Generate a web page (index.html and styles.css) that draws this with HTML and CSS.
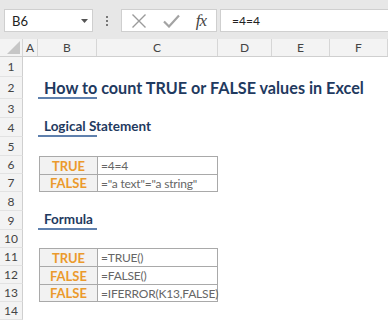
FILE: index.html
```html
<!DOCTYPE html>
<html lang="en">
<head>
    <meta charset="UTF-8">
    <title>How to count TRUE or FALSE values in Excel</title>
    <link rel="stylesheet" href="styles.css">
</head>
<body>
    <div class="toolbar">
        <div class="name-box">
            <span>B6</span>
            <svg class="caret" width="7" height="4" viewBox="0 0 7 4"><path d="M0 0h7L3.5 4z" fill="#555"/></svg>
        </div>
        <div class="grip"><i></i><i></i><i></i></div>
        <div class="fx-box">
            <svg width="16" height="16" viewBox="0 0 16 16"><path d="M1.5 1.5l13 13M14.5 1.5l-13 13" stroke="#9b9b9b" stroke-width="1.4" fill="none"/></svg>
            <svg width="17" height="14" viewBox="0 0 17 14"><path d="M1 7.5l5 5L16 1.5" stroke="#a3a3a3" stroke-width="2.2" fill="none"/></svg>
            <span class="fx">fx</span>
        </div>
        <div class="formula">=4=4</div>
    </div>

    <div class="sheet">
        <div class="row head">
            <div class="corner"><svg width="13" height="13" viewBox="0 0 13 13"><path d="M13 0v13H0z" fill="#c6c6c6"/></svg></div>
            <div>A</div><div>B</div><div>C</div><div>D</div><div>E</div><div>F</div>
        </div>
        <div class="row r20"><div class="num">1</div></div>
        <div class="row r22"><div class="num">2</div><div></div><div class="h1 line">How to count TRUE or FALSE values in Excel</div></div>
        <div class="row r19"><div class="num">3</div></div>
        <div class="row r19"><div class="num">4</div><div></div><div class="h2 line">Logical Statement</div></div>
        <div class="row r19"><div class="num">5</div></div>
        <div class="row r18"><div class="num">6</div><div></div><div class="key t">TRUE</div><div class="val t end">=4=4</div></div>
        <div class="row r18"><div class="num">7</div><div></div><div class="key t bot">FALSE</div><div class="val t end bot">="a text"="a string"</div></div>
        <div class="row r19"><div class="num">8</div></div>
        <div class="row r19"><div class="num">9</div><div></div><div class="h2 line">Formula</div></div>
        <div class="row r18"><div class="num">10</div></div>
        <div class="row r18"><div class="num">11</div><div></div><div class="key t">TRUE</div><div class="val t end">=TRUE()</div></div>
        <div class="row r18"><div class="num">12</div><div></div><div class="key t">FALSE</div><div class="val t end">=FALSE()</div></div>
        <div class="row r18"><div class="num">13</div><div></div><div class="key t bot">FALSE</div><div class="val t end bot">=IFERROR(K13,FALSE)</div></div>
        <div class="row r18"><div class="num">14</div></div>
    </div>
</body>
</html>
```

FILE: styles.css
```css
body {
    margin: 0;
    width: 388px;
    height: 320px;
    overflow: hidden;
    font-family: 'Lato', 'Liberation Sans', sans-serif;
    background: #ffffff;
    color: #333;
}
.toolbar {
    display: flex;
    align-items: stretch;
    height: 39px;
    padding-top: 9px;
    box-sizing: border-box;
    background: #e7e7e7;
}
.name-box {
    display: flex;
    align-items: center;
    justify-content: space-between;
    width: 89px;
    height: 23px;
    margin-left: 4px;
    padding: 0 4px 0 7px;
    box-sizing: border-box;
    background: #fff;
    border: 1px solid #cfcfcf;
    font-size: 13px;
    color: #222;
}
.grip {
    display: flex;
    flex-direction: column;
    justify-content: center;
    gap: 2px;
    width: 28px;
    height: 23px;
    align-items: center;
}
.grip i {
    width: 2px;
    height: 2px;
    background: #777;
}
.fx-box {
    display: flex;
    align-items: center;
    justify-content: space-between;
    width: 96px;
    height: 23px;
    padding: 0 10px 0 9px;
    box-sizing: border-box;
    background: #fff;
    border: 1px solid #cfcfcf;
}
.fx {
    font-family: 'Liberation Serif', serif;
    font-style: italic;
    font-size: 17px;
    color: #444;
    letter-spacing: -1px;
}
.formula {
    flex: 1;
    height: 23px;
    margin-left: 3px;
    padding-left: 11px;
    line-height: 22px;
    box-sizing: border-box;
    background: #fff;
    border: 1px solid #cfcfcf;
    border-right: none;
    font-size: 12px;
    color: #222;
}
.row {
    display: grid;
    grid-template-columns: 23px 15px 59px 121px 54px 58px 58px;
}
.r18 { height: 18px; }
.r19 { height: 19px; }
.r20 { height: 20px; }
.r22 { height: 22px; }
.head {
    height: 18px;
    background: #f3f3f3;
    border-bottom: 1px solid #cfcfcf;
    box-sizing: border-box;
}
.head > div {
    border-right: 1px solid #d6d6d6;
    text-align: center;
    font-size: 12px;
    line-height: 17px;
    color: #444;
}
.head .corner {
    display: flex;
    align-items: flex-end;
    justify-content: flex-end;
    padding: 0 2px 2px 0;
}
.num {
    background: #f3f3f3;
    border-right: 1px solid #cfcfcf;
    border-bottom: 1px solid #e2e2e2;
    box-sizing: border-box;
    text-align: center;
    font-size: 12px;
    color: #444;
    display: flex;
    align-items: center;
    justify-content: center;
}
.line {
    border-bottom: 2px solid #5f80ad;
    white-space: nowrap;
    overflow: visible;
    padding-left: 6px;
    display: flex;
    align-items: flex-end;
}
.h1 {
    font-size: 16.2px;
    font-weight: bold;
    color: #1f3a60;
    line-height: 18px;
}
.h2 {
    font-size: 13.5px;
    font-weight: bold;
    color: #1f3a60;
    line-height: 17px;
}
.t {
    border-left: 1px solid #a9a9a9;
    border-top: 1px solid #a9a9a9;
    box-sizing: border-box;
    display: flex;
    align-items: center;
    white-space: nowrap;
}
.t.end { border-right: 1px solid #a9a9a9; }
.t.bot { border-bottom: 1px solid #a9a9a9; }
.key {
    justify-content: center;
    margin-left: 1px;
    background: #f2f2f2;
    font-size: 13px;
    font-weight: bold;
    color: #eb9a2c;
}
.val {
    padding-left: 3px;
    font-size: 12px;
    letter-spacing: -0.2px;
    color: #666;
}
```
